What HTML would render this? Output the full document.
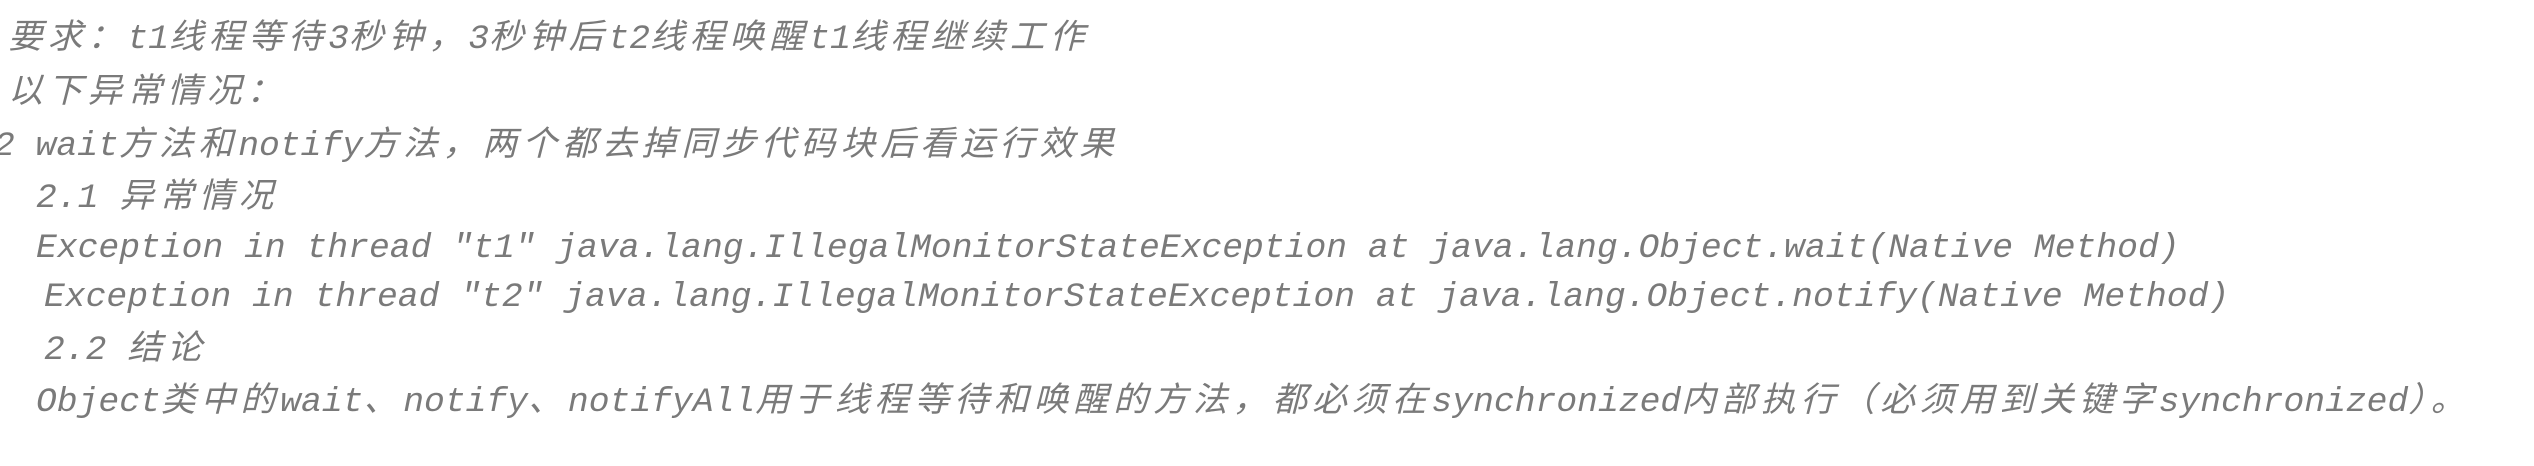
<!DOCTYPE html>
<html><head><meta charset="utf-8"><style>
html,body{margin:0;padding:0;background:#fff;width:2534px;height:466px;overflow:hidden}
.l{position:absolute;white-space:pre;font-family:"Liberation Mono","Noto Sans CJK SC",monospace;font-style:italic;font-size:34px;color:#7a7a7a;line-height:40px;transform:scaleX(1.02);transform-origin:left}
.c{letter-spacing:5px}
</style></head><body>
<div class="l" style="left:8px;top:20px"><span class="c">要求：</span>t1<span class="c">线程等待</span>3<span class="c">秒钟，</span>3<span class="c">秒钟后</span>t2<span class="c">线程唤醒</span>t1<span class="c">线程继续工作</span></div>
<div class="l" style="left:8px;top:74px"><span class="c">以下异常情况：</span></div>
<div class="l" style="left:-6px;top:127px">2 wait<span class="c">方法和</span>notify<span class="c">方法，两个都去掉同步代码块后看运行效果</span></div>
<div class="l" style="left:36px;top:179px">2.1 <span class="c">异常情况</span></div>
<div class="l" style="left:36px;top:229px">Exception in thread "t1" java.lang.IllegalMonitorStateException at java.lang.Object.wait(Native Method)</div>
<div class="l" style="left:44px;top:278px">Exception in thread "t2" java.lang.IllegalMonitorStateException at java.lang.Object.notify(Native Method)</div>
<div class="l" style="left:44px;top:331px">2.2 <span class="c">结论</span></div>
<div class="l" style="left:36px;top:383px">Object<span class="c">类中的</span>wait<span class="c">、</span>notify<span class="c">、</span>notifyAll<span class="c">用于线程等待和唤醒的方法，都必须在</span>synchronized<span class="c">内部执行（必须用到关键字</span>synchronized<span class="c">）。</span></div>
</body></html>
